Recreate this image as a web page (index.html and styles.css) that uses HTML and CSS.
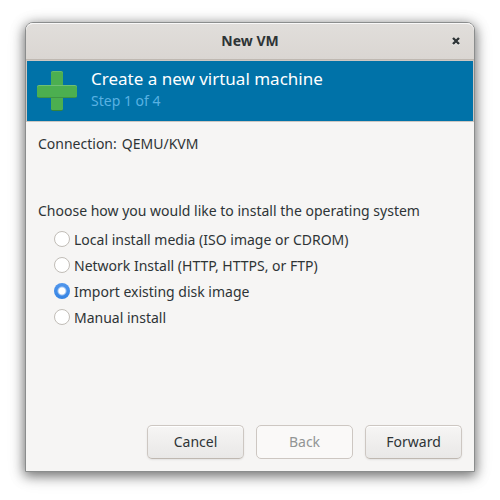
FILE: index.html
```html
<!DOCTYPE html>
<html lang="en">
<head>
<meta charset="utf-8">
<meta name="viewport" content="width=device-width, initial-scale=1">
<title>New VM</title>
<link rel="stylesheet" href="styles.css">
</head>
<body>
<main class="window">
  <header class="titlebar">
    <h1 class="title">New VM</h1>
    <button class="close" type="button" aria-label="Close">
      <svg width="10" height="10" viewBox="0 0 10 10" aria-hidden="true"><path d="M2 2l6 6M8 2l-6 6" transform="translate(0 1)" stroke="#fff" stroke-width="2.2" opacity=".7"/><path d="M2 2l6 6M8 2l-6 6" stroke="#2e3436" stroke-width="2.4"/></svg>
    </button>
  </header>
  <section class="banner">
    <svg class="plus" width="40" height="40" viewBox="0 0 40 40" aria-hidden="true">
      <rect x="14" y="0" width="12" height="40" rx="2" fill="#33843a"/>
      <rect x="14" y="0" width="12" height="39" rx="2" fill="#65bb69"/>
      <rect x="14" y="1" width="12" height="38" rx="2" fill="#4caf50"/>
      <rect x="0" y="15" width="40" height="12" rx="2" fill="#3f9443"/>
      <rect x="0" y="14" width="40" height="12" rx="2" fill="#70bf73"/>
      <rect x="0" y="15" width="40" height="11" rx="2" fill="#4caf50"/>
    </svg>
    <div class="banner-text">
      <h2 class="heading">Create a new virtual machine</h2>
      <p class="step">Step 1 of 4</p>
    </div>
  </section>
  <form class="content">
    <p class="connection"><span>Connection:</span><span>QEMU/KVM</span></p>
    <fieldset class="choices">
      <legend>Choose how you would like to install the operating system</legend>
      <label class="choice"><input type="radio" name="method">Local install media (ISO image or CDROM)</label>
      <label class="choice"><input type="radio" name="method">Network Install (HTTP, HTTPS, or FTP)</label>
      <label class="choice"><input type="radio" name="method" checked>Import existing disk image</label>
      <label class="choice"><input type="radio" name="method">Manual install</label>
    </fieldset>
    <div class="actions">
      <button class="button" type="button">Cancel</button>
      <button class="button" type="button" disabled>Back</button>
      <button class="button" type="button">Forward</button>
    </div>
  </form>
</main>
</body>
</html>
```
FILE: styles.css
```css
* { box-sizing: border-box; }

body {
  margin: 0;
  min-height: 100vh;
  padding: 22px 25px 28px;
  display: flex;
  background: #fff;
  color: #2e3436;
  font: 14px/20px "Noto Sans", "Open Sans", sans-serif;
}

h1, h2, p { margin: 0; }

.window {
  flex: 1;
  min-width: 0;
  display: flex;
  flex-direction: column;
  border: 1px solid #8b8d8d;
  border-radius: 8px 8px 0 0;
  background: #f6f5f4;
  box-shadow: 0 3px 12px 1px rgba(0, 0, 0, 0.5), 0 4px 20px rgba(0, 0, 0, 0.12);
}

.titlebar {
  display: grid;
  grid-template-columns: 36px 1fr 36px;
  align-items: center;
  height: 37px;
  border-bottom: 1px solid #bfb8b1;
  border-radius: 7px 7px 0 0;
  background: linear-gradient(#e1dedb, #dad6d2);
  box-shadow: inset 0 1px #f9f8f8;
}

.title {
  grid-column: 2;
  font-size: 14px;
  line-height: 20px;
  font-weight: 700;
  text-align: center;
}

.close {
  display: grid;
  place-items: center;
  height: 36px;
  padding: 0;
  border: 0;
  background: none;
}

.banner {
  display: flex;
  align-items: center;
  gap: 14px;
  height: 62px;
  padding: 0 10px;
  border: 1px solid #cdc7c2;
  background: #0072a8;
}

.plus { flex: none; }

.banner-text { padding-bottom: 4px; }

.heading {
  color: #fff;
  font-size: 17px;
  line-height: 24px;
  font-weight: 400;
}

.step { color: #59b1e2; }

.content {
  flex: 1;
  display: flex;
  flex-direction: column;
  padding: 12px;
}

.connection {
  display: flex;
  gap: 5px;
}

.choices {
  margin: 47px 0 0;
  padding: 0;
  border: 0;
}

.choices legend {
  padding: 0;
  margin-bottom: 6px;
}

.choice {
  display: flex;
  align-items: center;
  gap: 4px;
  height: 26px;
  padding-left: 16px;
}

.choice input {
  appearance: none;
  flex: none;
  width: 16px;
  height: 16px;
  margin: 0 0 2px;
  border: 1px solid #c1bdb7;
  border-radius: 50%;
  background: #fff;
}

.choice input:checked {
  border: 0;
  background: radial-gradient(circle, #fff 3px, transparent 5px), linear-gradient(#5196ec, #3584e4);
}

.actions {
  display: flex;
  justify-content: flex-end;
  gap: 12px;
  margin-top: auto;
}

.button {
  width: 97px;
  height: 34px;
  padding: 0;
  border: 1px solid #cdc7c2;
  border-bottom-color: #bfb8b1;
  border-radius: 5px;
  background: linear-gradient(#f6f5f4, #e9e8e7);
  box-shadow: inset 0 1px #fff, 0 1px 2px rgba(0, 0, 0, 0.08);
  color: inherit;
  font: inherit;
}

.button:disabled {
  border-color: #cdc7c2;
  background: #faf9f8;
  box-shadow: none;
  color: #929595;
}
```
